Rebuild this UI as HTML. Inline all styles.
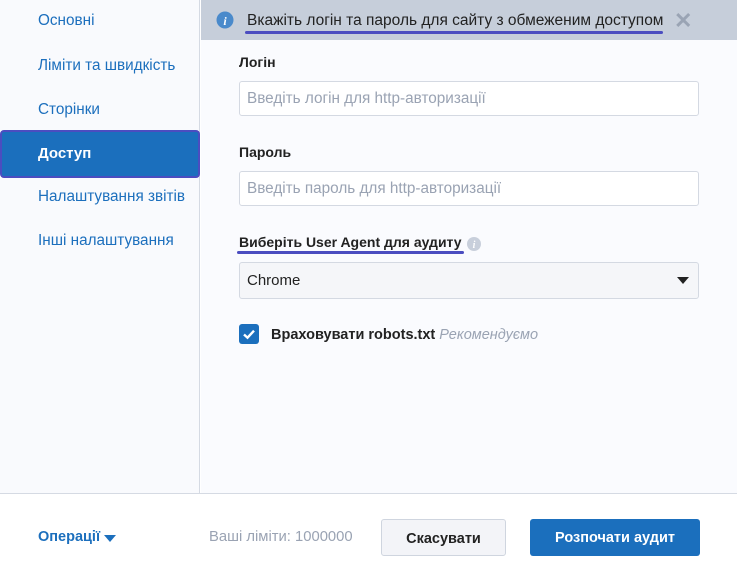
<!DOCTYPE html>
<html><head><meta charset="utf-8"><style>
*{box-sizing:border-box;margin:0;padding:0}
body{width:737px;height:580px;background:#fff;font-family:"Liberation Sans",sans-serif;position:relative;overflow:hidden;font-size:14px}
.side{position:absolute;left:0;top:0;width:200px;height:493px;background:#f9fafd;border-right:1px solid #d5dae3}
.side div{position:absolute;left:38px;color:#1c6fbd;font-size:15.3px}
.active{position:absolute;left:0;top:130px;width:200px;height:48px;background:#1b6fbd;border:2px solid #4b4dc0;border-radius:4px}
.main{position:absolute;left:201px;top:0;width:536px;height:493px;background:#fafbfe}
.banner{position:absolute;left:201px;top:0;width:536px;height:40px;background:#c6ceda}
.lbl{position:absolute;left:239px;font-weight:bold;font-size:14px;color:#222}
.inp{position:absolute;left:239px;width:460px;height:35px;border:1px solid #d4d9e2;border-radius:3px;background:#fff;color:#9aa3b3;font-size:15.3px;padding:8px 7px}
.foot{position:absolute;left:0;top:493px;width:737px;height:87px;border-top:1px solid #d5dae3;background:#fff}
.ul{position:absolute;height:3px;background:#4b4dc0;border-radius:2px}
</style></head><body>
<div class="side">
<div style="top:12px">Основні</div>
<div style="top:57px">Ліміти та швидкість</div>
<div style="top:101px">Сторінки</div>
<div style="top:188px">Налаштування звітів</div>
<div style="top:232px">Інші налаштування</div>
</div>
<div class="active"></div>
<div style="position:absolute;left:38px;top:145px;color:#fff;font-weight:bold;font-size:15px">Доступ</div>
<div class="main"></div>
<div class="banner"></div>
<svg style="position:absolute;left:216px;top:11px" width="18" height="18"><circle cx="9" cy="9" r="8.5" fill="#4a8acb"/><text x="9" y="14" font-family="Liberation Serif" font-style="italic" font-weight="bold" font-size="12" fill="#fff" text-anchor="middle">i</text></svg>
<div style="position:absolute;left:247px;top:12px;font-size:15.5px;color:#222">Вкажіть логін та пароль для сайту з обмеженим доступом</div>
<div class="ul" style="left:245px;top:31px;width:418px"></div>
<div style="position:absolute;left:674px;top:8px;font-size:22px;color:#9aa4b4;font-weight:bold">✕</div>
<div class="lbl" style="top:54px">Логін</div>
<div class="inp" style="top:81px">Введіть логін для http-авторизації</div>
<div class="lbl" style="top:144px">Пароль</div>
<div class="inp" style="top:171px">Введіть пароль для http-авторизації</div>
<div class="lbl" style="top:234px">Виберіть User Agent для аудиту</div>
<div class="ul" style="left:237px;top:251px;width:227px"></div>
<svg style="position:absolute;left:467px;top:237px" width="14" height="14"><circle cx="7" cy="7" r="7" fill="#c8cfdb"/><text x="7" y="11" font-family="Liberation Serif" font-style="italic" font-weight="bold" font-size="10" fill="#fff" text-anchor="middle">i</text></svg>
<div class="inp" style="top:262px;height:37px;background:#f5f6f9;color:#222;font-size:15px;padding:9px 7px">Chrome</div>
<div style="position:absolute;left:677px;top:277px;width:0;height:0;border-left:6px solid transparent;border-right:6px solid transparent;border-top:7px solid #222"></div>
<div style="position:absolute;left:239px;top:324px;width:20px;height:20px;background:#1b6fbd;border-radius:3px"></div>
<svg style="position:absolute;left:239px;top:324px" width="20" height="20"><path d="M5 10.5l3.5 3.2 6.5-7" stroke="#fff" stroke-width="2.4" fill="none"/></svg>
<div style="position:absolute;left:271px;top:327px;font-weight:bold;font-size:14.5px;color:#222">Враховувати robots.txt <span style="font-weight:normal;font-style:italic;color:#9aa3b3">Рекомендуємо</span></div>
<div class="foot"></div>
<div style="position:absolute;left:38px;top:529px;color:#1c6fbd;font-weight:bold;font-size:14.5px">Операції</div>
<div style="position:absolute;left:104px;top:535px;border-left:6px solid transparent;border-right:6px solid transparent;border-top:7px solid #1c6fbd"></div>
<div style="position:absolute;left:209px;top:529px;color:#9aa3b3;font-size:14.8px">Ваші ліміти: 1000000</div>
<div style="position:absolute;left:381px;top:519px;width:125px;height:37px;background:#f3f4f8;border:1px solid #cfd5df;border-radius:3px;text-align:center;line-height:35px;font-weight:bold;font-size:14.5px;color:#222;padding-top:2px">Скасувати</div>
<div style="position:absolute;left:530px;top:519px;width:170px;height:37px;background:#1b6fbd;border-radius:3px;text-align:center;line-height:37px;font-weight:bold;font-size:14.5px;color:#fff;padding-top:1px">Розпочати аудит</div>
</body></html>
